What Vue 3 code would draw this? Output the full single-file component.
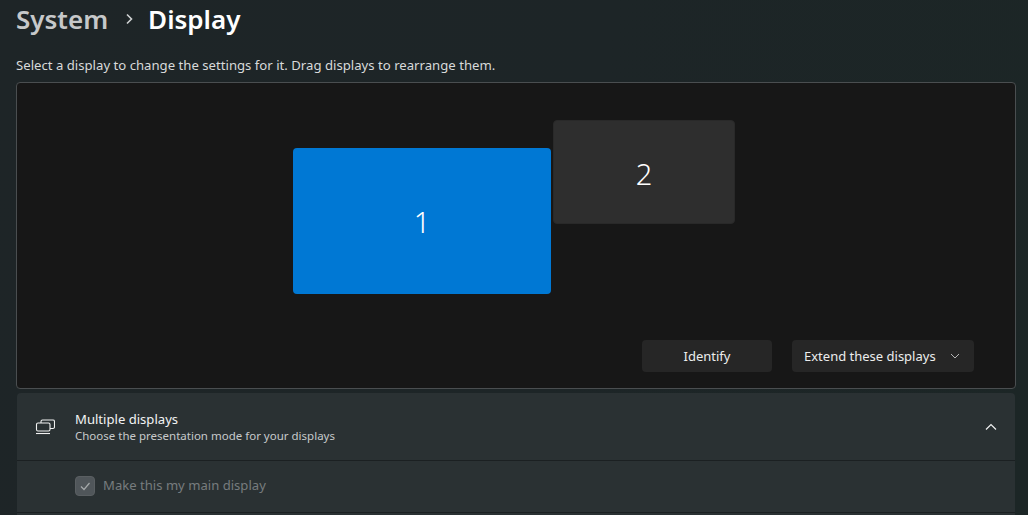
<script setup>
const monitors = [
  { id: 1, cls: "mon-main" },
  { id: 2, cls: "mon-second" },
];
</script>

<template>
  <div class="page">
    <div class="crumbs">
      <span class="crumb-parent">System</span>
      <svg class="crumb-sep" width="12" height="12" viewBox="0 0 12 12">
        <path d="M2 1.500 6.500 6 2 10.500" fill="none" stroke="#d0d2d3" stroke-width="1.600" />
      </svg>
      <span class="crumb-current">Display</span>
    </div>
    <p class="hint">Select a display to change the settings for it. Drag displays to rearrange them.</p>

    <div class="arrange">
      <div v-for="m in monitors" :key="m.id" class="mon" :class="m.cls">{{ m.id }}</div>
      <div class="actions">
        <button class="btn btn-identify">Identify</button>
        <button class="btn btn-mode">
          <span>Extend these displays</span>
          <svg width="10" height="10" viewBox="0 0 10 10">
            <path d="M1 3l4 4 4-4" fill="none" stroke="#b5b5b5" stroke-width="1" />
          </svg>
        </button>
      </div>
    </div>

    <div class="card">
      <div class="card-head">
        <svg class="card-icon" width="20" height="18" viewBox="0 0 20 18">
          <g fill="none" stroke="#f0f1f1" stroke-width="1.100">
            <rect x="1.500" y="5" width="13.500" height="8" rx="1.500" />
            <path d="M6 5V3.500A1.500 1.500 0 0 1 7.500 2h10.500A1.500 1.500 0 0 1 19.500 3.500V9a1.500 1.500 0 0 1-1.500 1.500h-3" />
            <path d="M1 15.500h14" />
          </g>
        </svg>
        <div class="card-text">
          <div class="card-title">Multiple displays</div>
          <div class="card-sub">Choose the presentation mode for your displays</div>
        </div>
        <svg class="card-chevron" width="12" height="12" viewBox="0 0 12 12">
          <path d="M1 8.500 6 3.500l5 5" fill="none" stroke="#f0f1f1" stroke-width="1.200" />
        </svg>
      </div>
      <div class="card-row">
        <span class="check">
          <svg width="12" height="12" viewBox="0 0 12 12">
            <path d="M2 6.500 5 9.500 10.500 3" fill="none" stroke="#a5a9aa" stroke-width="1.200" />
          </svg>
        </span>
        <span class="check-label">Make this my main display</span>
      </div>
      <div class="card-rest"></div>
    </div>
  </div>
</template>

<style>
html,
body {
  margin: 0;
  background: #1d2527;
}
</style>

<style scoped>
.page {
  width: 1028px;
  height: 515px;
  overflow: hidden;
  box-sizing: border-box;
  padding: 0 12px 0 16px;
  font-family: "Noto Sans", "Open Sans", sans-serif;
  color: #fff;
  background: linear-gradient(100deg, #1e2527 0%, #1d2527 55%, #1c2626 100%);
}
.crumbs {
  display: flex;
  align-items: center;
  height: 38px;
}
.crumb-parent {
  font-size: 26px;
  font-weight: 600;
  color: #c6c8c9;
}
.crumb-sep {
  margin: 0 11px 0 17px;
}
.crumb-current {
  font-size: 26px;
  font-weight: 600;
}
.hint {
  margin: 17px 0 0;
  font-size: 13.160px;
  line-height: 20px;
  color: #d8dada;
}
.arrange {
  position: relative;
  box-sizing: border-box;
  width: 1000px;
  height: 307px;
  margin-top: 7px;
  background: #171717;
  border: 1px solid #4a4e50;
  border-radius: 4px;
}
.mon {
  position: absolute;
  display: flex;
  align-items: center;
  justify-content: center;
  box-sizing: border-box;
  border-radius: 4px;
  font-size: 29px;
  font-weight: 350;
}
.mon-main {
  left: 276px;
  top: 65px;
  width: 258px;
  height: 146px;
  background: #0078d4;
}
.mon-second {
  left: 536px;
  top: 37px;
  width: 182px;
  height: 104px;
  padding-top: 2px;
  background: #2e2e2e;
  border: 1px solid #292929;
}
.actions {
  position: absolute;
  right: 41px;
  bottom: 16px;
  display: flex;
  gap: 20px;
}
.btn {
  display: flex;
  align-items: center;
  justify-content: center;
  height: 32px;
  border: 0;
  border-radius: 4px;
  background: #262626;
  color: #eceded;
  font-family: inherit;
  font-size: 13px;
}
.btn-identify {
  width: 130px;
}
.btn-mode {
  width: 182px;
  justify-content: space-between;
  padding: 0 14px 0 12px;
}
.card {
  box-sizing: border-box;
  width: 998px;
  margin: 4px 0 0 1px;
  border-radius: 4px 4px 0 0;
  background: #2a3133;
}
.card-head {
  display: flex;
  align-items: center;
  height: 67px;
  padding: 0 18px;
  border-bottom: 1px solid #1b2022;
}
.card-icon {
  margin-right: 20px;
}
.card-text {
  flex: 1;
  padding-top: 1px;
}
.card-title {
  font-size: 13.100px;
  line-height: 18px;
  color: #f2f3f3;
}
.card-sub {
  font-size: 11.500px;
  line-height: 16px;
  color: #c7cacb;
}
.card-row {
  display: flex;
  align-items: center;
  height: 49px;
  padding: 0 0 2px 58px;
  border-bottom: 1px solid #1b2022;
}
.card-rest {
  height: 8px;
}
.check {
  display: flex;
  align-items: center;
  justify-content: center;
  box-sizing: border-box;
  width: 20px;
  height: 20px;
  margin-right: 8px;
  border-radius: 4px;
  background: #50565a;
  border: 1px solid #5a5f62;
}
.check-label {
  margin-bottom: 2px;
  font-size: 13.100px;
  color: #777c7e;
}
</style>
